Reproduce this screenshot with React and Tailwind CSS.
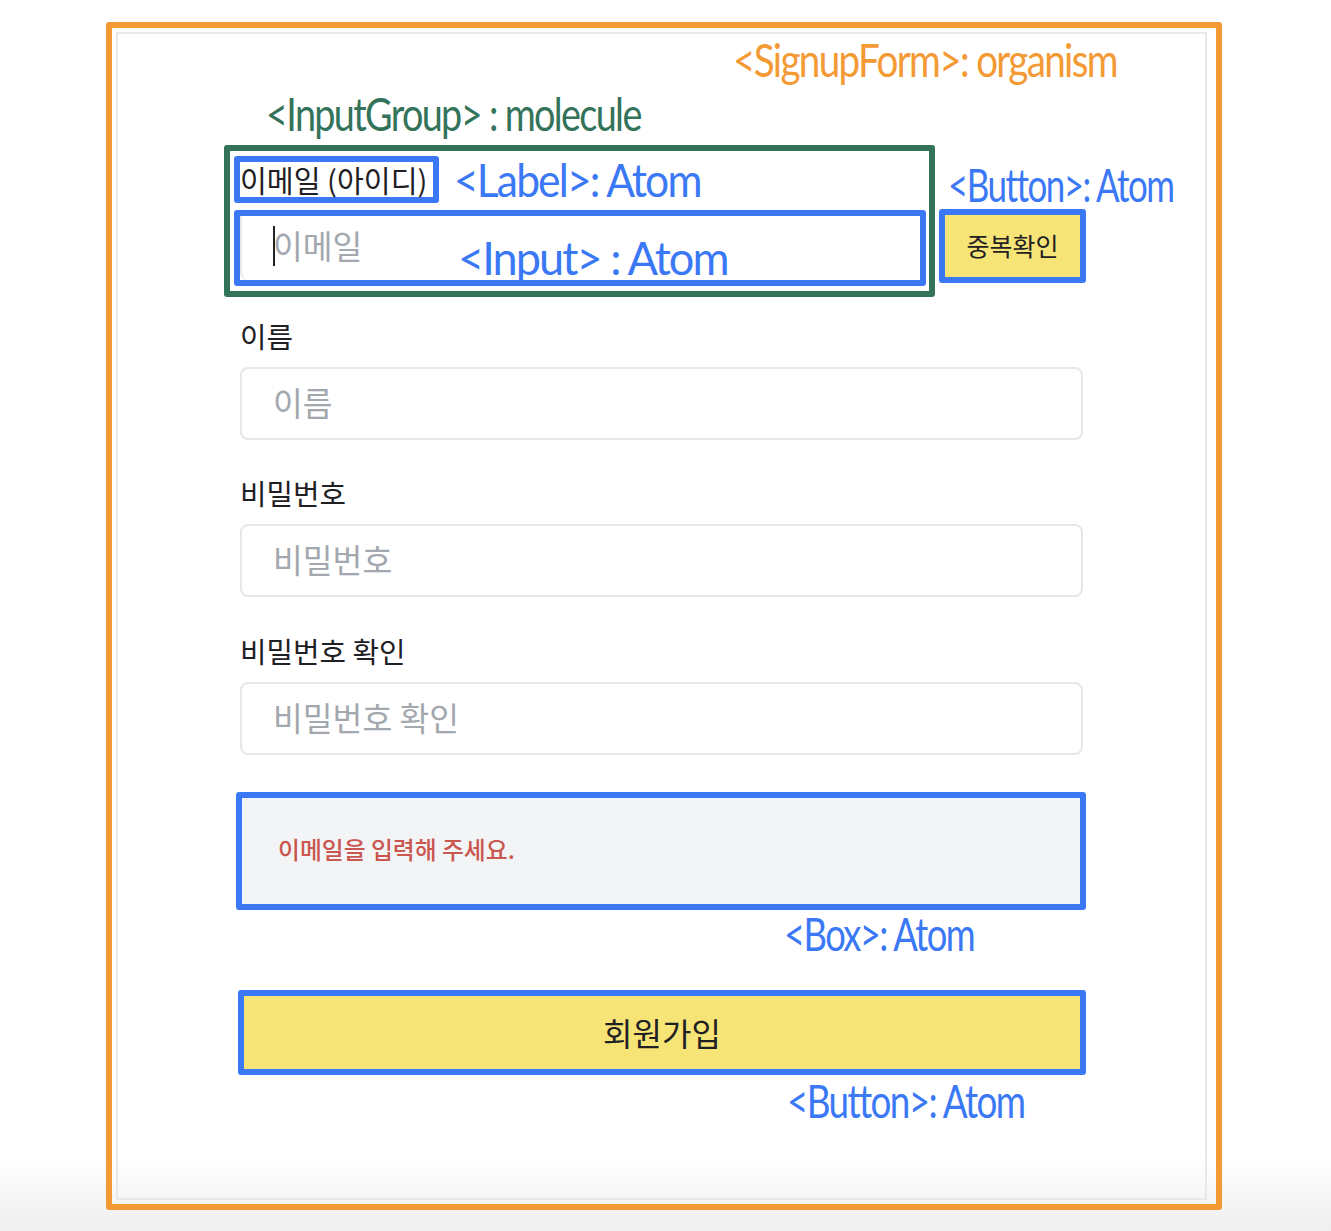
const kr = { fontFamily: '"Noto Sans CJK KR","Noto Sans",sans-serif' };

function Field({ label, placeholder }) {
  return (
    <div>
      <label className="mb-[11px] block h-10 text-[28.8px] leading-10 text-[#1f2024]">{label}</label>
      <input
        readOnly
        placeholder={placeholder}
        style={kr}
        className="h-[73px] w-full rounded-lg border-2 border-[#e5e7eb] bg-white px-[31px] pb-1 text-[32.4px] outline-none placeholder:text-[#a3a7ae]"
      />
    </div>
  );
}

function Note({ className, children }) {
  return (
    <span
      style={{ fontFamily: '"Lato","Open Sans",sans-serif' }}
      className={`absolute origin-left whitespace-nowrap text-[46px] leading-[56px] tracking-[-2px] ${className}`}
    >
      {children}
    </span>
  );
}

export default function App() {
  return (
    <div style={kr} className="relative h-[1231px] w-[1331px] overflow-hidden bg-gradient-to-b from-white from-[94%] to-[#efefef] pl-[106px] pt-[22px]">
      <div className="h-[1188px] w-[1116px] rounded-[3px] border-[6px] border-[#f39a35] pb-[4px] pl-[4px] pr-[9px] pt-[4px]">
        <div className="h-full border-2 border-[#e7e8ea] pl-[122px] pt-[111px]">
          <form className="w-[843px]">
            <div className="-ml-4 flex w-max items-start gap-1">
              <div className="h-[152px] w-[711px] rounded-[3px] border-[6px] border-[#33735a] pl-1 pt-[5px]">
                <div className="h-[47px] w-[205px] rounded-[3px] border-[6px] border-[#3b78f5] text-[29.2px] leading-[34px] text-[#1f2024]">
                  <label className="whitespace-nowrap">이메일 (아이디)</label>
                </div>
                <div className="relative mt-[7px] h-[76px] w-[692px] rounded-[3px] border-[6px] border-[#3b78f5]">
                  <input
                    readOnly
                    placeholder="이메일"
                    style={kr}
                    className="h-full w-full rounded-bl-lg border-l-2 border-[#e5e7eb] bg-white px-[31px] pb-2 text-[32.4px] outline-none placeholder:text-[#a3a7ae]"
                  />
                  <div className="absolute left-[33px] top-[10px] h-10 w-[2px] bg-[#222]" />
                </div>
              </div>
              <button type="button" className="mt-16 h-[74px] w-[147px] rounded-[3px] border-[6px] border-[#3b78f5] bg-[#f6e476] text-[25px] text-[#1f2024]">
                중복확인
              </button>
            </div>

            <div className="mt-[19px] flex flex-col gap-[33.33px]">
              <Field label="이름" placeholder="이름" />
              <Field label="비밀번호" placeholder="비밀번호" />
              <Field label="비밀번호 확인" placeholder="비밀번호 확인" />
            </div>

            <div className="-ml-1 mt-[37px] flex h-[118px] w-[850px] items-center rounded-[3px] border-[6px] border-[#3b78f5] bg-[#f3f4f6] pb-1 pl-[36px] text-[23.8px] font-medium text-[#c9564f]">
              이메일을 입력해 주세요.
            </div>
            <button type="button" className="-ml-[2px] mt-20 block h-[85px] w-[848px] rounded-[3px] border-[6px] border-[#3b78f5] bg-[#f6e476] text-[32px] text-[#1f2024]">
              회원가입
            </button>
          </form>
        </div>
      </div>

      <Note className="left-[733px] top-[32px] scale-x-[0.84] text-[#f39a35]">{'<SignupForm>: organism'}</Note>
      <Note className="left-[266px] top-[86px] scale-x-[0.82] text-[#33735a]">{'<InputGroup> : molecule'}</Note>
      <Note className="left-[454px] top-[152px] scale-x-[0.925] text-[#3b78f5]">{'<Label>: Atom'}</Note>
      <Note className="left-[458px] top-[230px] scale-x-[0.98] text-[#3b78f5]">{'<Input> : Atom'}</Note>
      <Note className="left-[948px] top-[157px] scale-x-[0.76] text-[#3b78f5]">{'<Button>: Atom'}</Note>
      <Note className="left-[784px] top-[906px] scale-x-[0.79] text-[#3b78f5]">{'<Box>: Atom'}</Note>
      <Note className="left-[787px] top-[1073px] scale-x-[0.8] text-[#3b78f5]">{'<Button>: Atom'}</Note>
    </div>
  );
}
